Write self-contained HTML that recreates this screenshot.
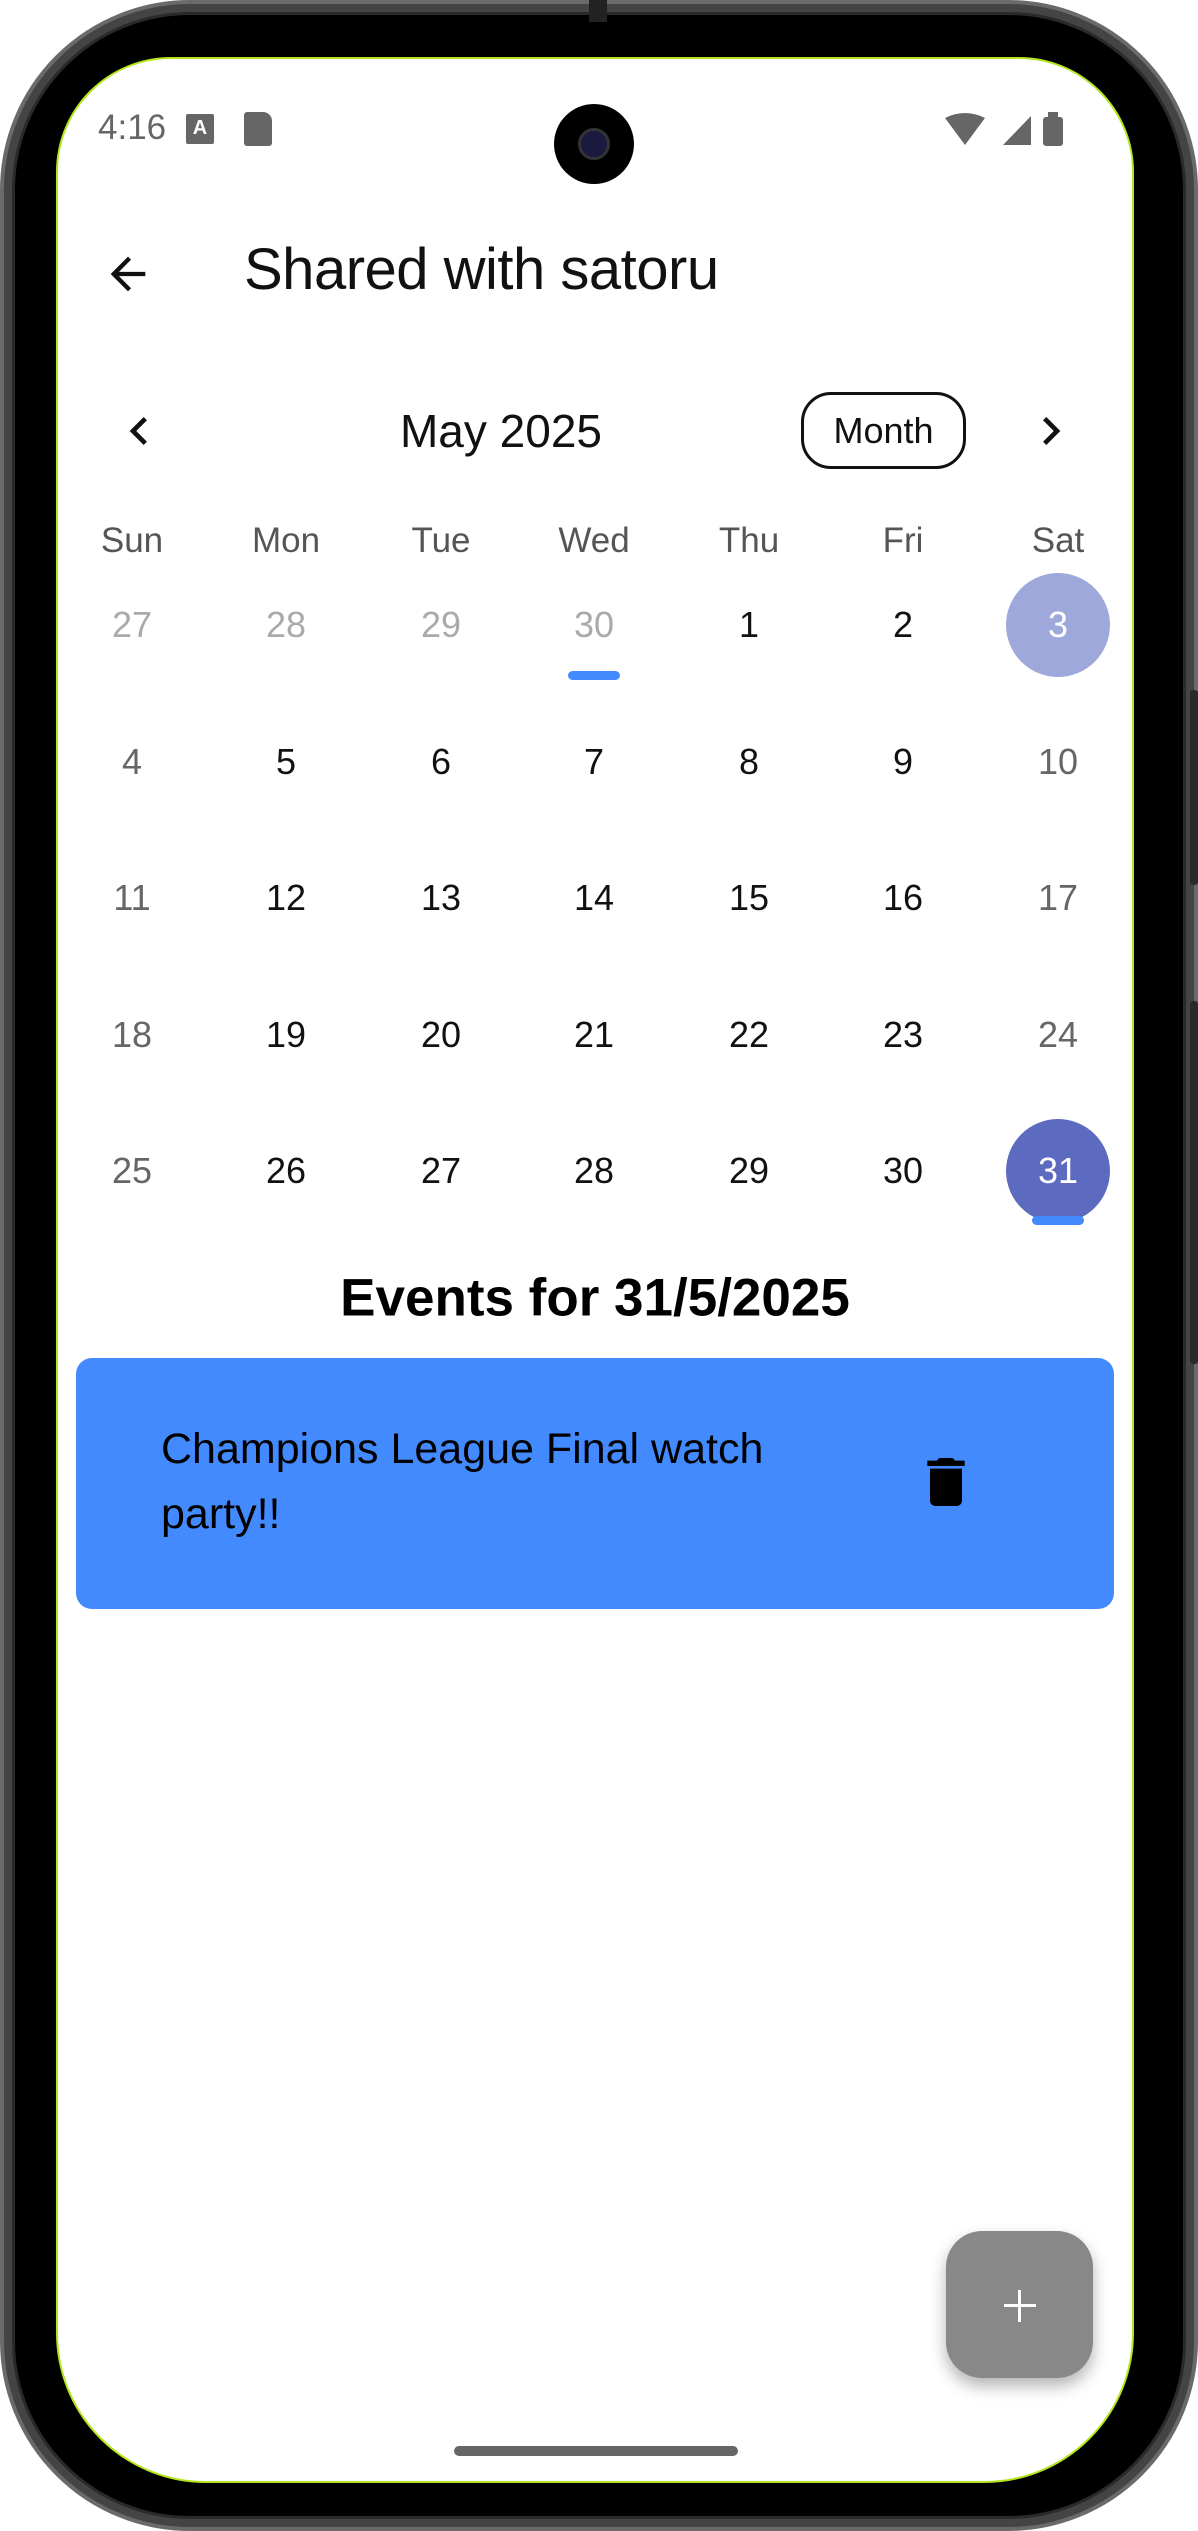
<!DOCTYPE html>
<html><head><meta charset="utf-8"><style>
*{margin:0;padding:0;box-sizing:border-box}
body{width:1198px;height:2531px;background:#fff;position:relative;overflow:hidden;font-family:"Liberation Sans",sans-serif}
.abs{position:absolute}
.frame{left:0;top:0;width:1198px;height:2531px;border-radius:190px;background:#444;border:4px solid #6a6a6a}
.inner{left:12px;top:12px;width:1174px;height:2507px;border-radius:178px;background:#000;border:3px solid #2a2a2a}
.screen{left:56px;top:57px;width:1078px;height:2426px;background:#fff;border:2px solid #b5e61d;border-radius:115px 115px 150px 150px;overflow:hidden}
.c{position:absolute;transform:translate(-50%,-50%);white-space:nowrap}
.btn{background:#2a2a2a}
</style></head><body>
<div class="abs frame"></div>
<div class="abs inner"></div>
<div class="abs btn" style="left:1190px;top:690px;width:8px;height:195px;border-radius:3px"></div>
<div class="abs btn" style="left:1190px;top:1001px;width:8px;height:363px;border-radius:3px"></div>
<div class="abs" style="left:589px;top:0;width:18px;height:22px;background:#222"></div>
<div class="abs screen">
 <div style="position:relative;width:100%;height:100%;left:-58px;top:-59px">
  <div class="abs" style="left:98px;top:108px;font-size:35px;color:#666">4:16</div>
  <div class="abs" style="left:186px;top:114px;width:28px;height:30px;background:#666;border-radius:2px;color:#fff;font-size:20px;font-weight:bold;text-align:center;line-height:28px">A</div>
  <div class="abs" style="left:244px;top:112px;width:28px;height:34px;background:#666;border-radius:3px 9px 3px 3px"></div>
  <svg class="abs" style="left:945px;top:112px" width="130" height="36" viewBox="0 0 130 36">
   <path d="M0 6 Q20 -4 40 6 L20 33 Z" fill="#666"/>
   <path d="M58 33 L86 4 L86 33 Z" fill="#666"/>
   <rect x="98" y="5" width="20" height="29" rx="3" fill="#666"/><rect x="103" y="0" width="10" height="6" fill="#666"/>
  </svg>
  <div class="abs" style="left:554px;top:104px;width:80px;height:80px;border-radius:50%;background:#000"></div>
  <div class="abs" style="left:578px;top:128px;width:32px;height:32px;border-radius:50%;background:#1a1a3e;border:3px solid #333"></div>
  <svg class="abs" style="left:102px;top:248px" width="52" height="52" viewBox="0 0 24 24"><path d="M20 11H7.83l5.59-5.59L12 4l-8 8 8 8 1.41-1.41L7.83 13H20v-2z" fill="#111"/></svg>
  <div class="abs" style="left:244px;top:236px;font-size:58px;color:#111;letter-spacing:-0.5px">Shared with satoru</div>
  <svg class="abs" style="left:111px;top:403px" width="56" height="56" viewBox="0 0 24 24"><path d="M15.41 7.41L14 6l-6 6 6 6 1.41-1.41L10.83 12z" fill="#111"/></svg>
  <div class="c" style="left:501px;top:431px;font-size:46px;color:#111">May 2025</div>
  <div class="abs" style="left:801px;top:392px;width:165px;height:77px;border:3px solid #111;border-radius:30px;font-size:36px;color:#111;text-align:center;line-height:71px">Month</div>
  <svg class="abs" style="left:1023px;top:403px" width="56" height="56" viewBox="0 0 24 24"><path d="M8.59 16.59L10 18l6-6-6-6-1.41 1.41L13.17 12z" fill="#111"/></svg>
  <div style="font-size:35px;color:#555">
   <div class="c" style="left:132px;top:541px">Sun</div><div class="c" style="left:286px;top:541px">Mon</div><div class="c" style="left:441px;top:541px">Tue</div><div class="c" style="left:594px;top:541px">Wed</div><div class="c" style="left:749px;top:541px">Thu</div><div class="c" style="left:903px;top:541px">Fri</div><div class="c" style="left:1058px;top:541px">Sat</div>
  </div>
  <div class="abs" style="left:1006px;top:573px;width:104px;height:104px;border-radius:50%;background:#9fa8da"></div>
  <div class="abs" style="left:1006px;top:1119px;width:104px;height:104px;border-radius:50%;background:#5c6bc0"></div>
  <div class="abs" style="left:568px;top:671px;width:52px;height:9px;border-radius:5px;background:#448aff"></div>
  <div class="abs" style="left:1032px;top:1216px;width:52px;height:9px;border-radius:5px;background:#448aff"></div>
  <div style="font-size:36px">
   <div class="c" style="left:132px;top:625px;color:#aaa">27</div><div class="c" style="left:286px;top:625px;color:#aaa">28</div><div class="c" style="left:441px;top:625px;color:#aaa">29</div><div class="c" style="left:594px;top:625px;color:#aaa">30</div><div class="c" style="left:749px;top:625px;color:#111">1</div><div class="c" style="left:903px;top:625px;color:#111">2</div><div class="c" style="left:1058px;top:625px;color:#fff">3</div>
   <div class="c" style="left:132px;top:762px;color:#666">4</div><div class="c" style="left:286px;top:762px;color:#111">5</div><div class="c" style="left:441px;top:762px;color:#111">6</div><div class="c" style="left:594px;top:762px;color:#111">7</div><div class="c" style="left:749px;top:762px;color:#111">8</div><div class="c" style="left:903px;top:762px;color:#111">9</div><div class="c" style="left:1058px;top:762px;color:#666">10</div>
   <div class="c" style="left:132px;top:898px;color:#666">11</div><div class="c" style="left:286px;top:898px;color:#111">12</div><div class="c" style="left:441px;top:898px;color:#111">13</div><div class="c" style="left:594px;top:898px;color:#111">14</div><div class="c" style="left:749px;top:898px;color:#111">15</div><div class="c" style="left:903px;top:898px;color:#111">16</div><div class="c" style="left:1058px;top:898px;color:#666">17</div>
   <div class="c" style="left:132px;top:1035px;color:#666">18</div><div class="c" style="left:286px;top:1035px;color:#111">19</div><div class="c" style="left:441px;top:1035px;color:#111">20</div><div class="c" style="left:594px;top:1035px;color:#111">21</div><div class="c" style="left:749px;top:1035px;color:#111">22</div><div class="c" style="left:903px;top:1035px;color:#111">23</div><div class="c" style="left:1058px;top:1035px;color:#666">24</div>
   <div class="c" style="left:132px;top:1171px;color:#666">25</div><div class="c" style="left:286px;top:1171px;color:#111">26</div><div class="c" style="left:441px;top:1171px;color:#111">27</div><div class="c" style="left:594px;top:1171px;color:#111">28</div><div class="c" style="left:749px;top:1171px;color:#111">29</div><div class="c" style="left:903px;top:1171px;color:#111">30</div><div class="c" style="left:1058px;top:1171px;color:#fff">31</div>
  </div>
  <div class="c" style="left:595px;top:1298px;font-size:53px;font-weight:bold;color:#000">Events for 31/5/2025</div>
  <div class="abs" style="left:76px;top:1358px;width:1038px;height:251px;border-radius:16px;background:#448aff"></div>
  <div class="abs" style="left:161px;top:1417px;width:760px;font-size:43px;line-height:65px;color:#000">Champions League Final watch<br>party!!</div>
  <svg class="abs" style="left:926px;top:1458px" width="40" height="48" viewBox="5 3 14 18"><path d="M6 19c0 1.1.9 2 2 2h8c1.1 0 2-.9 2-2V7H6v12zM19 4h-3.5l-1-1h-5l-1 1H5v2h14V4z" fill="#000"/></svg>
  <div class="abs" style="left:946px;top:2231px;width:147px;height:147px;border-radius:36px;background:#888;box-shadow:0 8px 16px rgba(0,0,0,0.3)"></div>
  <div class="abs" style="left:1004px;top:2304px;width:32px;height:3px;background:#fff"></div>
  <div class="abs" style="left:1018px;top:2290px;width:3px;height:32px;background:#fff"></div>
  <div class="abs" style="left:454px;top:2446px;width:284px;height:10px;border-radius:5px;background:#666"></div>
 </div>
</div>
</body></html>
